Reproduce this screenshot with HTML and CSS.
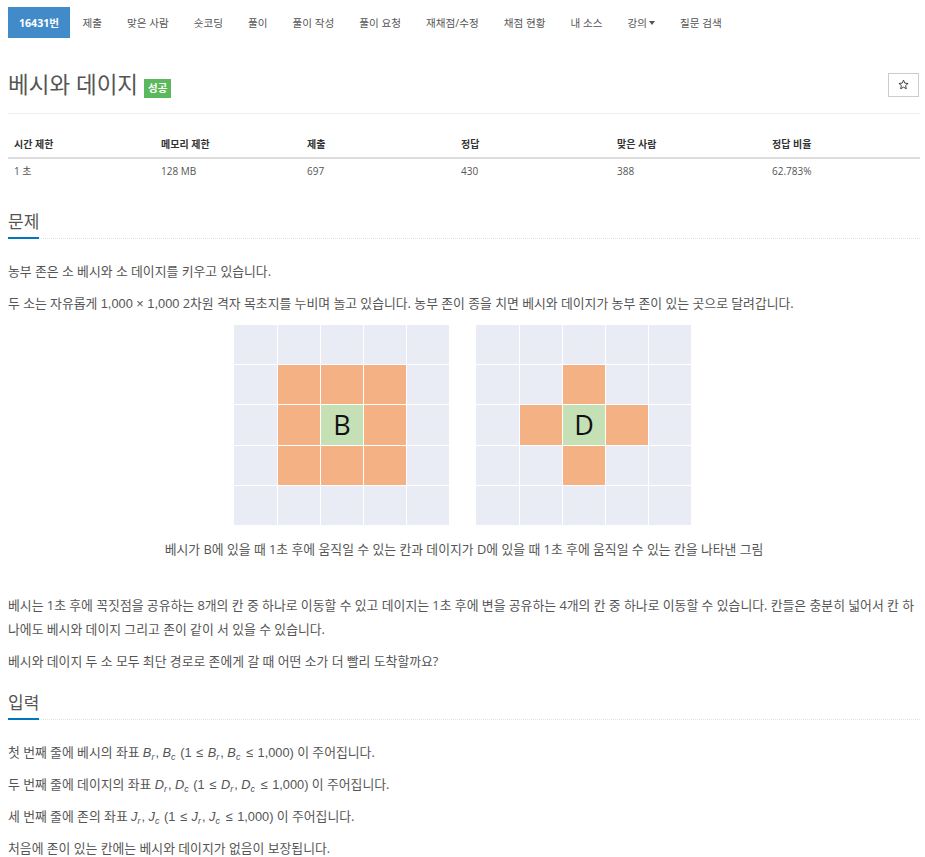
FILE: index.html
```html
<!DOCTYPE html>
<html lang="ko">
<head>
<meta charset="utf-8">
<title>베시와 데이지</title>
<link rel="stylesheet" href="styles.css">
</head>
<body>
<div class="page">
  <ul class="tabs">
    <li class="active">16431번</li>
    <li>제출</li>
    <li>맞은 사람</li>
    <li>숏코딩</li>
    <li>풀이</li>
    <li>풀이 작성</li>
    <li>풀이 요청</li>
    <li>재채점/수정</li>
    <li>채점 현황</li>
    <li>내 소스</li>
    <li>강의<span class="caret"></span></li>
    <li>질문 검색</li>
  </ul>

  <div class="title-row">
    <div class="title-group">
      <h1 class="title">베시와 데이지</h1>
      <span class="badge">성공</span>
    </div>
    <button class="star-btn" type="button">
      <svg width="11" height="11" viewBox="0 0 24 24"><path d="M12 2.5l2.9 6.6 7.1.6-5.4 4.7 1.6 7-6.2-3.7-6.2 3.7 1.6-7L2 9.7l7.1-.6z" fill="none" stroke="#333" stroke-width="2" stroke-linejoin="round"/></svg>
    </button>
  </div>

  <table class="info">
    <colgroup>
      <col class="c1"><col class="c2"><col class="c3"><col class="c4"><col class="c5"><col class="c6">
    </colgroup>
    <thead>
      <tr><th>시간 제한</th><th>메모리 제한</th><th>제출</th><th>정답</th><th>맞은 사람</th><th>정답 비율</th></tr>
    </thead>
    <tbody>
      <tr><td>1 초</td><td>128 MB</td><td>697</td><td>430</td><td>388</td><td>62.783%</td></tr>
    </tbody>
  </table>

  <section class="section">
    <h2 class="headline"><span>문제</span></h2>
    <p>농부 존은 소 베시와 소 데이지를 키우고 있습니다.</p>
    <p>두 소는 자유롭게 <span class="math">1,000 × 1,000</span> 2차원 격자 목초지를 누비며 놀고 있습니다. 농부 존이 종을 치면 베시와 데이지가 농부 존이 있는 곳으로 달려갑니다.</p>
    <div class="figure">
      <svg width="215" height="206" viewBox="0 0 215 206">
        <g transform="translate(0,2)">
          <g fill="#e9ebf5">
            <rect x="0" y="0" width="43" height="39"/><rect x="44" y="0" width="42" height="39"/><rect x="87" y="0" width="42" height="39"/><rect x="130" y="0" width="42" height="39"/><rect x="173" y="0" width="42" height="39"/>
            <rect x="0" y="40" width="43" height="39"/><rect x="173" y="40" width="42" height="39"/>
            <rect x="0" y="80" width="43" height="40"/><rect x="173" y="80" width="42" height="40"/>
            <rect x="0" y="121" width="43" height="39"/><rect x="173" y="121" width="42" height="39"/>
            <rect x="0" y="161" width="43" height="39"/><rect x="44" y="161" width="42" height="39"/><rect x="87" y="161" width="42" height="39"/><rect x="130" y="161" width="42" height="39"/><rect x="173" y="161" width="42" height="39"/>
          </g>
          <g fill="#f4b183">
            <rect x="44" y="40" width="42" height="39"/><rect x="87" y="40" width="42" height="39"/><rect x="130" y="40" width="42" height="39"/>
            <rect x="44" y="80" width="42" height="40"/><rect x="130" y="80" width="42" height="40"/>
            <rect x="44" y="121" width="42" height="39"/><rect x="87" y="121" width="42" height="39"/><rect x="130" y="121" width="42" height="39"/>
          </g>
          <rect x="87" y="80" width="42" height="40" fill="#c5e0b4"/>
          <text x="108" y="110" class="cell-letter" text-anchor="middle">B</text>
        </g>
      </svg>
      <svg width="215" height="206" viewBox="0 0 215 206">
        <g transform="translate(0,2)">
          <g fill="#e9ebf5">
            <rect x="0" y="0" width="43" height="39"/><rect x="44" y="0" width="42" height="39"/><rect x="87" y="0" width="42" height="39"/><rect x="130" y="0" width="42" height="39"/><rect x="173" y="0" width="42" height="39"/>
            <rect x="0" y="40" width="43" height="39"/><rect x="44" y="40" width="42" height="39"/><rect x="130" y="40" width="42" height="39"/><rect x="173" y="40" width="42" height="39"/>
            <rect x="0" y="80" width="43" height="40"/><rect x="173" y="80" width="42" height="40"/>
            <rect x="0" y="121" width="43" height="39"/><rect x="44" y="121" width="42" height="39"/><rect x="130" y="121" width="42" height="39"/><rect x="173" y="121" width="42" height="39"/>
            <rect x="0" y="161" width="43" height="39"/><rect x="44" y="161" width="42" height="39"/><rect x="87" y="161" width="42" height="39"/><rect x="130" y="161" width="42" height="39"/><rect x="173" y="161" width="42" height="39"/>
          </g>
          <g fill="#f4b183">
            <rect x="87" y="40" width="42" height="39"/>
            <rect x="44" y="80" width="42" height="40"/><rect x="130" y="80" width="42" height="40"/>
            <rect x="87" y="121" width="42" height="39"/>
          </g>
          <rect x="87" y="80" width="42" height="40" fill="#c5e0b4"/>
          <text x="108" y="110" class="cell-letter" text-anchor="middle">D</text>
        </g>
      </svg>
    </div>
    <p class="caption">베시가 B에 있을 때 1초 후에 움직일 수 있는 칸과 데이지가 D에 있을 때 1초 후에 움직일 수 있는 칸을 나타낸 그림</p>
    <p>베시는 1초 후에 꼭짓점을 공유하는 8개의 칸 중 하나로 이동할 수 있고 데이지는 1초 후에 변을 공유하는 4개의 칸 중 하나로 이동할 수 있습니다. 칸들은 충분히 넓어서 칸 하나에도 베시와 데이지 그리고 존이 같이 서 있을 수 있습니다.</p>
    <p>베시와 데이지 두 소 모두 최단 경로로 존에게 갈 때 어떤 소가 더 빨리 도착할까요?</p>
  </section>

  <section class="section">
    <h2 class="headline"><span>입력</span></h2>
    <p>첫 번째 줄에 베시의 좌표 <span class="math"><i>B</i><sub><i>r</i></sub>, <i>B</i><sub><i>c</i></sub> (1 <span class="rel">≤</span> <i>B</i><sub><i>r</i></sub>, <i>B</i><sub><i>c</i></sub> <span class="rel">≤</span> 1,000)</span> 이 주어집니다.</p>
    <p>두 번째 줄에 데이지의 좌표 <span class="math"><i>D</i><sub><i>r</i></sub>, <i>D</i><sub><i>c</i></sub> (1 <span class="rel">≤</span> <i>D</i><sub><i>r</i></sub>, <i>D</i><sub><i>c</i></sub> <span class="rel">≤</span> 1,000)</span> 이 주어집니다.</p>
    <p>세 번째 줄에 존의 좌표 <span class="math"><i>J</i><sub><i>r</i></sub>, <i>J</i><sub><i>c</i></sub> (1 <span class="rel">≤</span> <i>J</i><sub><i>r</i></sub>, <i>J</i><sub><i>c</i></sub> <span class="rel">≤</span> 1,000)</span> 이 주어집니다.</p>
    <p>처음에 존이 있는 칸에는 베시와 데이지가 없음이 보장됩니다.</p>
  </section>
</div>
</body>
</html>
```

FILE: styles.css
```css
html, body {
  margin: 0;
  padding: 0;
  background: #ffffff;
}

body {
  font-family: "Open Sans", "Noto Sans CJK KR", sans-serif;
  color: #555555;
}

.page {
  padding: 7px 5px 0 8px;
}

.tabs {
  list-style: none;
  margin: 0;
  padding: 0;
  display: flex;
  height: 31px;
}

.tabs li {
  padding: 0 12.5px;
  height: 31px;
  font-size: 10.6px;
  color: #555555;
  white-space: nowrap;
  display: flex;
  align-items: center;
}

.tabs li.active {
  background: #428bca;
  color: #ffffff;
  font-weight: bold;
  padding: 0 11px;
}

.caret {
  display: inline-block;
  width: 0;
  height: 0;
  margin-left: 2px;
  border-top: 4px solid #555555;
  border-left: 3px solid transparent;
  border-right: 3px solid transparent;
}

.title-row {
  margin-top: 24px;
  height: 46px;
  padding-bottom: 5px;
  border-bottom: 1px solid #eeeeee;
  display: flex;
  align-items: center;
  justify-content: space-between;
}

.title-group {
  display: flex;
  align-items: flex-end;
}

.title {
  margin: 0;
  font-size: 22.5px;
  line-height: 28px;
  font-weight: normal;
  color: #555555;
}

.badge {
  margin-left: 6px;
  margin-bottom: 1px;
  height: 19px;
  line-height: 19px;
  padding: 0 4px;
  background: #5cb85c;
  color: #ffffff;
  font-size: 10.5px;
  font-weight: bold;
}

.star-btn {
  width: 31px;
  height: 24px;
  margin: 0 1px 1px 0;
  padding: 0;
  border: 1px solid #cccccc;
  background: #ffffff;
  display: flex;
  align-items: center;
  justify-content: center;
}

.info {
  margin-top: 17px;
  width: 100%;
  border-collapse: collapse;
  table-layout: fixed;
  font-size: 10px;
}

.info .c1 { width: 147px; }
.info .c2 { width: 146px; }
.info .c3 { width: 154px; }
.info .c4 { width: 156px; }
.info .c5 { width: 155px; }
.info .c6 { width: 154px; }

.info th {
  text-align: left;
  font-weight: bold;
  color: #333333;
  padding: 5px 6px;
  line-height: 16px;
  border-bottom: 2px solid #dddddd;
}

.info td {
  padding: 4px 6px 6px;
  line-height: 16px;
  color: #555555;
}

.section {
  margin-top: 27px;
  display: flow-root;
}

.section + .section {
  margin-top: 12px;
}

.headline {
  margin: 0 0 20px;
  font-size: 17px;
  font-weight: normal;
  line-height: 20px;
  color: #555555;
  border-bottom: 1px dotted #e0e0e0;
  height: 26px;
}

.headline span {
  display: inline-block;
  padding-bottom: 5px;
  border-bottom: 2px solid #0076c0;
}

.section p {
  margin: 0 0 8px;
  font-size: 12.85px;
  line-height: 24px;
  height: auto;
  color: #555555;
}

.figure {
  display: flex;
  justify-content: center;
  gap: 27px;
  padding-right: 3px;
  margin-bottom: 8px;
}

.figure svg {
  display: block;
}

.cell-letter {
  font-family: "Open Sans", "Noto Sans", sans-serif;
  font-size: 27px;
  fill: #111111;
}

.section p.caption {
  text-align: center;
  margin-bottom: 32px;
}

.math {
  font-family: "Liberation Sans", sans-serif;
  font-size: 12.8px;
  line-height: 1;
}

.math i {
  font-style: italic;
}

.math sub {
  font-size: 9px;
  line-height: 0;
  vertical-align: -3px;
  margin-right: 1px;
}

.rel {
  margin: 0 1px;
}
```
